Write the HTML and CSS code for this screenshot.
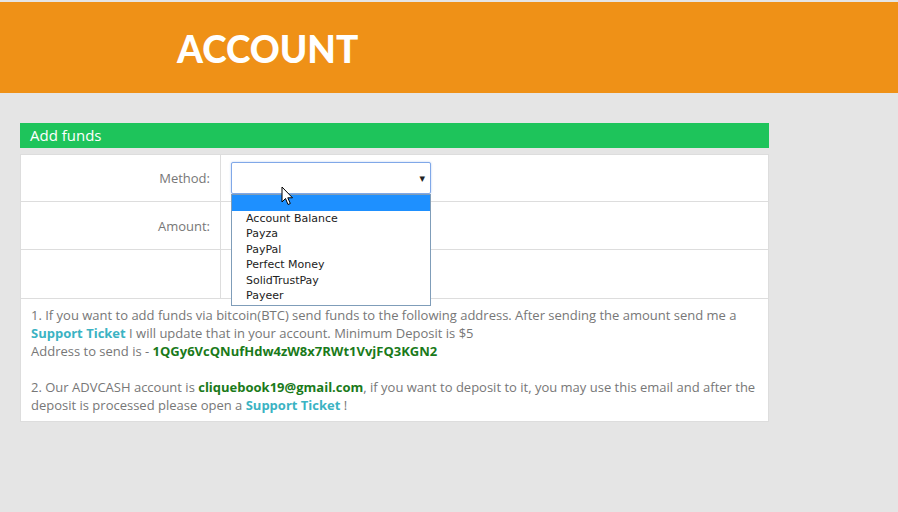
FILE: index.html
```html
<!doctype html>
<html lang="en">
  <head>
    <meta charset="UTF-8" />
    <title>Account - Add funds</title>
    <link rel="stylesheet" href="styles.css">
  </head>
  <body>
    <div class="header">
      <h1>ACCOUNT</h1>
    </div>

    <div class="main">
      <div class="panel-heading">Add funds</div>

      <table class="funds">
        <tr class="row-method">
          <td class="label">Method:</td>
          <td>
            <div class="select-wrap">
              <div class="select">
                <span class="arrow">&#9662;</span>
              </div>
              <ul class="options">
                <li class="active">&nbsp;</li>
                <li>Account Balance</li>
                <li>Payza</li>
                <li>PayPal</li>
                <li>Perfect Money</li>
                <li>SolidTrustPay</li>
                <li>Payeer</li>
              </ul>
              <svg class="cursor" width="13" height="20" viewBox="0 0 13 20">
                <path d="M1 1 L1 16 L4.5 12.5 L7 18.5 L9.3 17.5 L6.8 11.8 L11.5 11.8 Z"
                      fill="#fff" stroke="#000" stroke-width="1" stroke-linejoin="miter" />
              </svg>
            </div>
          </td>
        </tr>
        <tr class="row-amount">
          <td class="label">Amount:</td>
          <td></td>
        </tr>
        <tr class="row-submit">
          <td></td>
          <td></td>
        </tr>
        <tr>
          <td colspan="2" class="info">
            1. If you want to add funds via bitcoin(BTC) send funds to the following address. After sending the amount send me a
            <a href="#" class="link">Support Ticket</a> I will update that in your account. Minimum Deposit is $5<br>
            Address to send is - <b class="green">1QGy6VcQNufHdw4zW8x7RWt1VvjFQ3KGN2</b><br>
            <br>
            2. Our ADVCASH account is <b class="green">cliquebook19@gmail.com</b>, if you want to deposit to it, you may use this email and after the
            deposit is processed please open a <a href="#" class="link">Support Ticket</a> !
          </td>
        </tr>
      </table>
    </div>
  </body>
</html>
```

FILE: styles.css
```css
body {
  margin: 0;
  background: #e5e5e5;
  font-family: "Open Sans", Arial, sans-serif;
  font-size: 13px;
  color: #777;
}
.header {
  margin-top: 2px;
  height: 91px;
  background: #ef9117;
  display: flex;
  align-items: center;
  padding-left: 177px;
}
.header h1 {
  margin: 0;
  padding-top: 2px;
  color: white;
  font-family: Lato, "Open Sans", sans-serif;
  font-weight: 900;
  font-size: 37px;
}
.main {
  padding: 30px 20px;
  width: 749px;
}
.panel-heading {
  background: #1ec45b;
  color: white;
  font-size: 15px;
  height: 25px;
  line-height: 25px;
  padding-left: 10px;
  margin-bottom: 6px;
}
.funds {
  width: 100%;
  border-collapse: collapse;
  background: white;
}
.funds td {
  border: 1px solid #ddd;
  padding: 0 10px;
}
.funds .label {
  width: 179px;
  text-align: right;
}
.row-method td {
  height: 46px;
}
.row-amount td {
  height: 47px;
}
.row-submit td {
  height: 48px;
}
.select-wrap {
  position: relative;
  width: 200px;
  height: 32px;
}
.select {
  box-sizing: border-box;
  height: 32px;
  border: 1px solid #80a8e8;
  border-radius: 2px;
  background: white;
  box-shadow: 0 0 2px rgba(102, 150, 230, 0.5);
  display: flex;
  justify-content: flex-end;
  align-items: center;
  padding-right: 5px;
}
.arrow {
  color: #222;
  font-family: "DejaVu Sans", sans-serif;
  font-size: 11px;
}
.options {
  position: absolute;
  left: 0;
  top: 32px;
  width: 200px;
  box-sizing: border-box;
  margin: 0;
  padding: 0 0 1px;
  list-style: none;
  background: white;
  border: 1px solid #7f9db9;
  font-family: "DejaVu Sans", Verdana, sans-serif;
  font-size: 11px;
  color: #222;
  z-index: 2;
}
.options li {
  height: 15.5px;
  line-height: 15.5px;
  padding-left: 14px;
}
.options li.active {
  background: #1e90ff;
}
.cursor {
  position: absolute;
  left: 50px;
  top: 24px;
  z-index: 3;
}
.funds .info {
  padding: 7px 10px 7px;
  line-height: 18px;
}
.link {
  color: #3bb3c3;
  font-weight: bold;
  text-decoration: none;
}
.green {
  color: #1a7a1a;
}
```
